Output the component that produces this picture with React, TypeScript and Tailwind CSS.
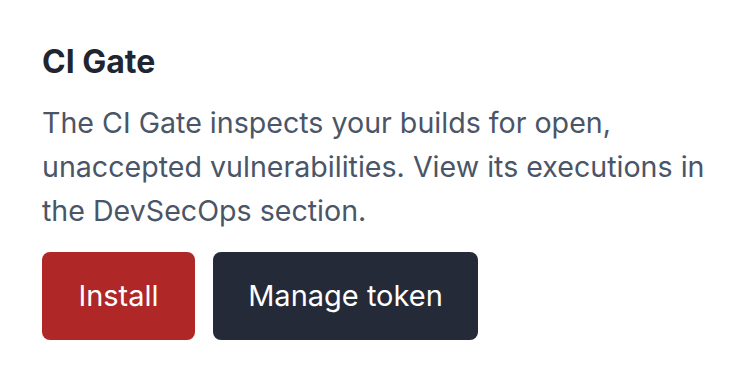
import React from "react";

export default function App() {
  return (
    <div
      className="w-[754px] h-[376px] bg-white pl-[42px] pr-[38px] pt-[42px]"
      style={{ fontFamily: "Inter, Roboto, 'Liberation Sans', sans-serif" }}
    >
      <h2 className="text-[32px] leading-[40px] font-bold text-[#1f2631]">CI Gate</h2>
      <p className="mt-[19px] text-[28.6px] leading-[44px] text-[#4a5567]">
        The CI Gate inspects your builds for open, unaccepted vulnerabilities. View its executions in the DevSecOps section.
      </p>
      <div className="mt-[19px] flex gap-[18px]">
        <button className="h-[88px] w-[153px] flex items-center justify-center rounded-[8px] bg-[#b02727] text-white text-[29px]">
          Install
        </button>
        <button className="h-[88px] w-[265px] flex items-center justify-center rounded-[8px] bg-[#242a37] text-white text-[29px]">
          Manage token
        </button>
      </div>
    </div>
  );
}
